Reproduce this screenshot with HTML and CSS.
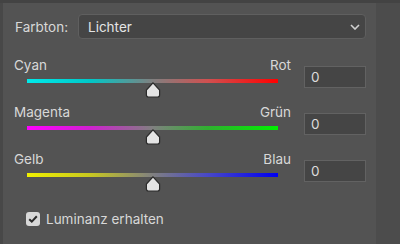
FILE: index.html
```html
<!DOCTYPE html>
<html>
<head>
    <title>Farbbalance</title>
    <link rel="stylesheet" href="styles.css">
</head>
<body>
    <div class="window">
        <div class="panel">
            <div class="tone-row">
                <span class="tone-label">Farbton:</span>
                <div class="select">
                    <span>Lichter</span>
                    <svg class="chevron" width="10" height="6" viewBox="0 0 10 6">
                        <path d="M1 1 L5 5 L9 1" fill="none" stroke="#d0d0d0" stroke-width="1.6"/>
                    </svg>
                </div>
            </div>

            <div class="slider-row">
                <div class="slider">
                    <div class="ends"><span>Cyan</span><span>Rot</span></div>
                    <div class="track cyan-red"></div>
                    <div class="thumb-line">
                        <svg class="thumb" width="16" height="16" viewBox="0 0 16 16">
                            <path d="M8 0.8 L14.6 8 L14.6 13 Q14.6 15 12.6 15 L3.4 15 Q1.4 15 1.4 13 L1.4 8 Z" fill="#e4e4e4" stroke="#2b2b2b" stroke-width="1.2"/>
                        </svg>
                    </div>
                </div>
                <div class="value">0</div>
            </div>

            <div class="slider-row">
                <div class="slider">
                    <div class="ends"><span>Magenta</span><span>Grün</span></div>
                    <div class="track magenta-green"></div>
                    <div class="thumb-line">
                        <svg class="thumb" width="16" height="16" viewBox="0 0 16 16">
                            <path d="M8 0.8 L14.6 8 L14.6 13 Q14.6 15 12.6 15 L3.4 15 Q1.4 15 1.4 13 L1.4 8 Z" fill="#e4e4e4" stroke="#2b2b2b" stroke-width="1.2"/>
                        </svg>
                    </div>
                </div>
                <div class="value">0</div>
            </div>

            <div class="slider-row">
                <div class="slider">
                    <div class="ends"><span>Gelb</span><span>Blau</span></div>
                    <div class="track yellow-blue"></div>
                    <div class="thumb-line">
                        <svg class="thumb" width="16" height="16" viewBox="0 0 16 16">
                            <path d="M8 0.8 L14.6 8 L14.6 13 Q14.6 15 12.6 15 L3.4 15 Q1.4 15 1.4 13 L1.4 8 Z" fill="#e4e4e4" stroke="#2b2b2b" stroke-width="1.2"/>
                        </svg>
                    </div>
                </div>
                <div class="value">0</div>
            </div>

            <label class="check-row">
                <span class="checkbox">
                    <svg width="10" height="8" viewBox="0 0 10 8">
                        <path d="M1.2 4.2 L3.8 6.6 L8.8 1.2" fill="none" stroke="#2a2a2a" stroke-width="2"/>
                    </svg>
                </span>
                Luminanz erhalten
            </label>
        </div>
        <div class="side"></div>
    </div>
</body>
</html>
```

FILE: styles.css
```css
body {
    margin: 0;
    background: #535353;
    font-family: Inter, "Noto Sans", sans-serif;
    font-size: 13.5px;
    color: #d8d8d8;
}
.window {
    display: flex;
    height: 244px;
    border-top: 3px solid #434343;
    box-sizing: border-box;
}
.panel {
    flex: 1;
    border-left: 3px solid #484848;
    padding: 11px 10px 0 11px;
}
.side {
    width: 24px;
    background: #4c4c4c;
}
.tone-row {
    display: flex;
    align-items: center;
    gap: 9px;
    height: 25px;
}
.tone-label {
    flex: none;
    width: 54px;
    margin-left: 1px;
    white-space: nowrap;
}
.select {
    flex: 1;
    height: 25px;
    box-sizing: border-box;
    display: flex;
    align-items: center;
    justify-content: space-between;
    padding: 0 5px 0 9px;
    background: #454545;
    border: 1px solid #5f5f5f;
    border-radius: 4px;
    color: #e4e4e4;
}
.chevron {
    margin-top: 1px;
}
.slider-row {
    display: flex;
    gap: 13px;
    height: 47px;
}
.tone-row + .slider-row {
    margin-top: 18px;
}
.slider {
    width: 277px;
}
.ends {
    display: flex;
    justify-content: space-between;
    height: 16px;
    line-height: 16px;
}
.track {
    height: 4px;
    margin: 6px 13px 0;
}
.cyan-red {
    background: linear-gradient(to right, #00eaea, #00c8c8 25%, #808080 50%, #d05050 72%, #ff0000);
}
.magenta-green {
    background: linear-gradient(to right, #ff00ff, #d020d0 25%, #808080 50%, #30b030 72%, #00f000);
}
.yellow-blue {
    background: linear-gradient(to right, #f0f000, #c8c820 25%, #808080 50%, #4848c8 72%, #0000f0);
}
.thumb-line {
    display: flex;
    justify-content: center;
    height: 16px;
    margin-top: -1px;
}
.value {
    width: 62px;
    height: 22px;
    box-sizing: border-box;
    margin-top: 9px;
    padding-left: 6px;
    line-height: 20px;
    background: #454545;
    border: 1px solid #626262;
    color: #dcdcdc;
}
.check-row {
    display: flex;
    align-items: center;
    gap: 6px;
    margin-top: 13px;
    margin-left: 12px;
    height: 16px;
}
.checkbox {
    width: 14px;
    height: 14px;
    border-radius: 3px;
    background: #d8d8d8;
    display: flex;
    align-items: center;
    justify-content: center;
}
```
